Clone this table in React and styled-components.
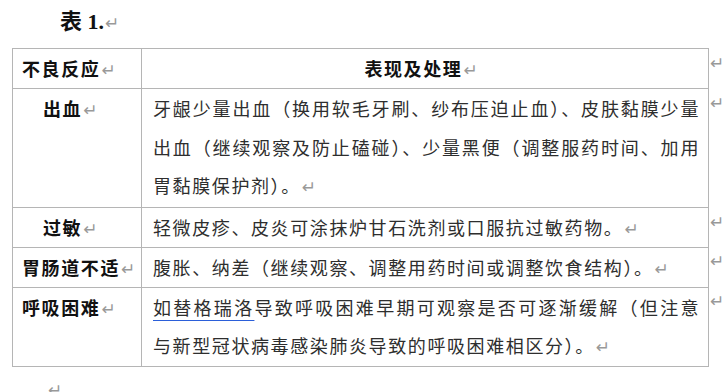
import React from "react";
import styled, { createGlobalStyle } from "styled-components";

const GlobalStyle = createGlobalStyle`
  html, body {
    margin: 0;
    padding: 0;
    background: #fff;
  }
  body {
    font-family: "Liberation Serif", "Noto Sans CJK SC", serif;
    color: #2a2a2a;
  }
`;

const rows = [
  {
    name: "出血",
    indent: true,
    height: 119,
    lines: [
      { text: "牙龈少量出血（换用软毛牙刷、纱布压迫止血）、皮肤黏膜少量", justify: true },
      { text: "出血（继续观察及防止磕碰）、少量黑便（调整服药时间、加用", justify: true },
      { text: "胃黏膜保护剂）。", end: true },
    ],
  },
  {
    name: "过敏",
    indent: true,
    height: 38,
    lines: [{ text: "轻微皮疹、皮炎可涂抹炉甘石洗剂或口服抗过敏药物。", end: true }],
  },
  {
    name: "胃肠道不适",
    height: 40,
    lines: [{ text: "腹胀、纳差（继续观察、调整用药时间或调整饮食结构）。", end: true }],
  },
  {
    name: "呼吸困难",
    height: 79,
    lines: [
      {
        flagged: "如替格瑞洛",
        text: "导致呼吸困难早期可观察是否可逐渐缓解（但注意",
        justify: true,
      },
      { text: "与新型冠状病毒感染肺炎导致的呼吸困难相区分）。", end: true },
    ],
  },
];

export default function App() {
  return (
    <Page>
      <GlobalStyle />
      <Caption>
        表 1.<Mark>↵</Mark>
      </Caption>
      <Sheet>
        <colgroup>
          <Col $w={129} />
          <Col $w={567} />
          <Col $w={14} />
        </colgroup>
        <tbody>
          <Row $h={40}>
            <Cell $bold $pad={9}>
              不良反应<Mark>↵</Mark>
            </Cell>
            <Cell $bold $center>
              表现及处理<Mark>↵</Mark>
            </Cell>
            <RowEnd>↵</RowEnd>
          </Row>
          {rows.map((row) => (
            <Row key={row.name} $h={row.height}>
              <Cell $bold $pad={row.indent ? 30 : 9}>
                {row.name}
                <Mark>↵</Mark>
              </Cell>
              <Cell $pad={11}>
                {row.lines.map((line, i) => (
                  <Line key={i} $justify={line.justify}>
                    {line.flagged && <Flagged>{line.flagged}</Flagged>}
                    {line.text}
                    {line.end && <Mark>↵</Mark>}
                  </Line>
                ))}
              </Cell>
              <RowEnd>↵</RowEnd>
            </Row>
          ))}
        </tbody>
      </Sheet>
      <Trail>
        <Mark>↵</Mark>
      </Trail>
    </Page>
  );
}

const Page = styled.div`
  width: 722px;
  height: 392px;
  overflow: hidden;
`;

const Caption = styled.p`
  margin: 0;
  height: 48px;
  padding-left: 60px;
  line-height: 44px;
  font-size: 22px;
  font-weight: 700;
  color: #111;
`;

const Sheet = styled.table`
  border-collapse: collapse;
  table-layout: fixed;
  margin-left: 12px;
  width: 710px;
`;

const Col = styled.col`
  width: ${(p) => p.$w}px;
`;

const Row = styled.tr`
  height: ${(p) => p.$h}px;
`;

const Cell = styled.td`
  border: 1px solid #b5b5b5;
  padding: 0 8px 0 ${(p) => p.$pad || 0}px;
  vertical-align: top;
  font-family: "Noto Sans CJK SC", sans-serif;
  line-height: 38.5px;
  font-size: 18px;
  letter-spacing: 1.6px;
  white-space: nowrap;
  font-weight: ${(p) => (p.$bold ? 700 : 400)};
  color: ${(p) => (p.$bold ? "#111" : "#2e2e2e")};
  text-align: ${(p) => (p.$center ? "center" : "left")};
`;

const Line = styled.span`
  display: block;
  text-align: ${(p) => (p.$justify ? "justify" : "left")};
  text-align-last: ${(p) => (p.$justify ? "justify" : "auto")};
`;

const Flagged = styled.span`
  text-decoration: underline;
  text-decoration-color: #2b5fd9;
  text-decoration-thickness: 1px;
  text-underline-offset: 5px;
`;

const Mark = styled.span`
  margin-left: 1px;
  font-family: "DejaVu Sans", sans-serif;
  font-size: 17px;
  font-weight: 400;
  line-height: 0;
  letter-spacing: 0;
  color: #999;
`;

const RowEnd = styled.td`
  border: none;
  padding: 0 0 0 1px;
  vertical-align: top;
  line-height: 28px;
  font-family: "DejaVu Sans", sans-serif;
  font-size: 17px;
  color: #999;
  white-space: nowrap;
`;

const Trail = styled.p`
  margin: 0;
  padding: 12px 0 0 47px;
  line-height: 24px;
`;
